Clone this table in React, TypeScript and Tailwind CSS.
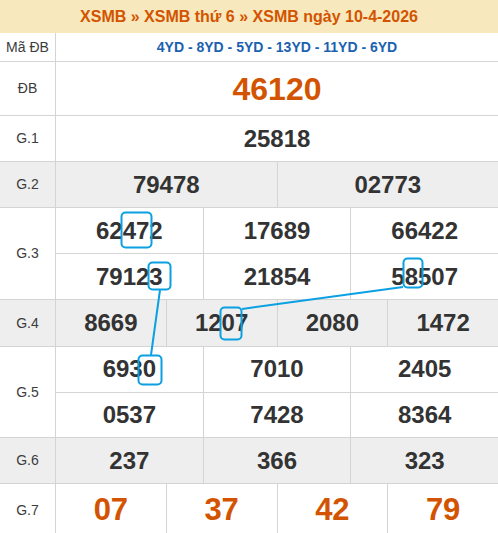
import React from 'react';

const font = { fontFamily: '"Liberation Sans", Arial, sans-serif' };

const Label = ({ text }: { text: string }) => (
  <div className="w-[56px] shrink-0 border-r border-[#d4d4d4] flex items-center justify-center text-[14px] text-[#3c3c3c]">
    {text}
  </div>
);

const Cells = ({ nums, orange = false }: { nums: string[]; orange?: boolean }) => (
  <div className="flex flex-1 h-full">
    {nums.map((n, i) => (
      <div
        key={i}
        className={`flex-1 flex items-center justify-center font-bold ${i > 0 ? 'border-l border-[#d4d4d4]' : ''} ${
          orange ? 'text-[31px] text-[#d35400]' : 'text-[24px] text-[#333333]'
        }`}
      >
        {n}
      </div>
    ))}
  </div>
);

const Row = ({ label, rows, h, gray = false, orange = false }: { label: string; rows: string[][]; h: string; gray?: boolean; orange?: boolean }) => (
  <div className={`flex border-b border-[#d4d4d4] ${h} ${gray ? 'bg-[#eeeeee]' : 'bg-white'}`}>
    <Label text={label} />
    <div className="flex-1 flex flex-col">
      {rows.map((r, i) => (
        <div key={i} className={`flex-1 flex ${i > 0 ? 'border-t border-[#d4d4d4]' : ''}`}>
          <Cells nums={r} orange={orange} />
        </div>
      ))}
    </div>
  </div>
);

const Overlay = () => (
  <svg className="absolute left-0 top-0 pointer-events-none" width="498" height="533" fill="none" stroke="#0aa0e2" strokeWidth="2">
    <rect x="121.5" y="212.5" width="30" height="35" rx="4" />
    <rect x="148.5" y="262.5" width="22" height="27" rx="4" />
    <rect x="138.5" y="355.5" width="23" height="29" rx="4" />
    <rect x="403.5" y="258.5" width="19" height="29" rx="4" />
    <rect x="220.5" y="307.5" width="21" height="32" rx="4" />
    <line x1="160" y1="290" x2="151" y2="355" />
    <line x1="403" y1="287" x2="242" y2="309" />
  </svg>
);

export default function App() {
  return (
    <div className="relative w-[498px] bg-white" style={font}>
      <div className="h-[33px] bg-[#f7e8bd] flex items-center justify-center text-[16px] font-bold text-[#d35400]">
        XSMB » XSMB thứ 6 » XSMB ngày 10-4-2026
      </div>
      <div className="flex h-[29px] border-b border-[#d4d4d4]">
        <Label text="Mã ĐB" />
        <div className="flex-1 flex items-center justify-center text-[14px] font-bold text-[#1a62b0]">
          4YD - 8YD - 5YD - 13YD - 11YD - 6YD
        </div>
      </div>
      <div className="flex h-[54px] border-b border-[#d4d4d4]">
        <Label text="ĐB" />
        <div className="flex-1 flex items-center justify-center text-[32px] font-bold text-[#d35400]">46120</div>
      </div>
      <Row label="G.1" h="h-[46px]" rows={[['25818']]} />
      <Row label="G.2" h="h-[46px]" gray rows={[['79478', '02773']]} />
      <Row label="G.3" h="h-[92px]" rows={[['62472', '17689', '66422'], ['79123', '21854', '58507']]} />
      <Row label="G.4" h="h-[47px]" gray rows={[['8669', '1207', '2080', '1472']]} />
      <Row label="G.5" h="h-[91px]" rows={[['6930', '7010', '2405'], ['0537', '7428', '8364']]} />
      <Row label="G.6" h="h-[46px]" gray rows={[['237', '366', '323']]} />
      <Row label="G.7" h="h-[54px]" orange rows={[['07', '37', '42', '79']]} />
      <Overlay />
    </div>
  );
}
